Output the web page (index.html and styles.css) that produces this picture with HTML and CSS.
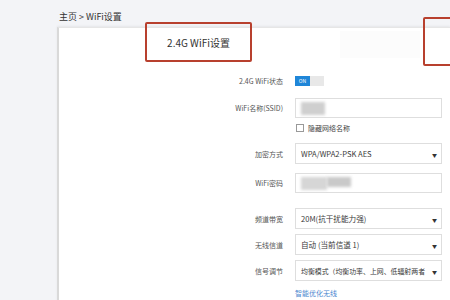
FILE: index.html
```html
<!DOCTYPE html>
<html lang="zh-CN">
<head>
    <meta charset="UTF-8">
    <title>WiFi设置</title>
    <link rel="stylesheet" href="styles.css">
</head>
<body>
    <div class="crumb">主页 &gt; WiFi设置</div>
    <div class="card">
        <div class="tabs">
            <div class="tab tab-active">2.4G WiFi设置</div>
            <div class="tab-gap"><div class="tab-shade"></div></div>
            <div class="tab tab-next"></div>
        </div>

        <div class="form">
            <div class="row row-toggle">
                <div class="label">2.4G WiFi状态</div>
                <div class="toggle"><span class="toggle-on">ON</span><span class="toggle-off"></span></div>
            </div>
            <div class="row row-ssid">
                <div class="label">WiFi名称(SSID)</div>
                <div class="field"><div class="blur blur-ssid"></div></div>
            </div>
            <div class="row row-check">
                <div class="label"></div>
                <label class="check"><span class="box"></span>隐藏网络名称</label>
            </div>
            <div class="row row-enc">
                <div class="label">加密方式</div>
                <div class="field select">WPA/WPA2-PSK AES<span class="arrow">▼</span></div>
            </div>
            <div class="row row-pass">
                <div class="label">WiFi密码</div>
                <div class="field"><div class="blur blur-pass"></div><div class="blur blur-pass2"></div></div>
            </div>
            <div class="row row-band">
                <div class="label">频道带宽</div>
                <div class="field select">20M(抗干扰能力强)<span class="arrow">▼</span></div>
            </div>
            <div class="row row-chan">
                <div class="label">无线信道</div>
                <div class="field select">自动 (当前信道 1)<span class="arrow">▼</span></div>
            </div>
            <div class="row row-sig">
                <div class="label">信号调节</div>
                <div class="field select"><span class="small">均衡模式（均衡功率、上网、低辐射两者</span><span class="arrow">▼</span></div>
            </div>
            <div class="row row-link">
                <div class="label"></div>
                <a class="link">智能优化无线</a>
            </div>
        </div>
    </div>
</body>
</html>
```

FILE: styles.css
```css
body {
    margin: 0;
    background-color: #f3f4f7;
    font-family: "Noto Sans CJK SC", "Noto Sans", sans-serif;
    color: #333;
    height: 300px;
    overflow: hidden;
}

.crumb {
    font-size: 9px;
    line-height: 14px;
    padding: 10px 0 0 59px;
    height: 17px;
    color: #333;
}

.card {
    margin-left: 57px;
    background: #ffffff;
    border-left: 2px solid #d9d9d9;
    border-top: 1px solid #e6e6e6;
    box-shadow: 0 -1px 2px rgba(0, 0, 0, 0.06);
    height: 280px;
}

.tabs {
    display: flex;
    height: 33px;
}

.tab {
    box-sizing: border-box;
    border: 2px solid #b8402e;
    border-radius: 2px;
    flex: none;
}

.tab-active {
    margin: -6px 0 0 86px;
    width: 107px;
    height: 40px;
    font-size: 10px;
    color: #333;
    display: flex;
    align-items: center;
    justify-content: center;
}

.tab-gap {
    width: 171px;
    flex: none;
    padding: 3px 0 0 88px;
    box-sizing: border-box;
}

.tab-shade {
    width: 80px;
    height: 27px;
    background: #fcfcfc;
}

.tab-next {
    margin-top: -11px;
    width: 40px;
    height: 49px;
}

.form {
    padding-top: 14px;
}

.row {
    display: flex;
    align-items: center;
}

.label {
    width: 236px;
    flex: none;
    text-align: right;
    font-size: 7px;
    color: #555;
    padding-right: 12px;
    box-sizing: border-box;
}

.field {
    width: 147px;
    height: 20px;
    box-sizing: border-box;
    border: 1px solid #dedede;
    background: #fff;
    position: relative;
    display: flex;
    align-items: center;
    padding-left: 5px;
    font-size: 7.6px;
    color: #3a3a3a;
}

.select {
    height: 21px;
}

.arrow {
    position: absolute;
    right: 4px;
    top: 7px;
    font-size: 5px;
    color: #333;
}

.small {
    font-size: 6.9px;
    white-space: nowrap;
}

.row-toggle { height: 12px; }
.row-ssid { margin-top: 11px; }
.row-check { margin-top: 5px; height: 10px; }
.row-enc { margin-top: 10px; }
.row-pass { margin-top: 9px; }
.row-band { margin-top: 15px; }
.row-chan { margin-top: 5px; }
.row-sig { margin-top: 5px; }
.row-link { margin-top: 6px; height: 12px; }

.toggle {
    display: flex;
    height: 10px;
}

.toggle-on {
    width: 15px;
    background: #1f86d8;
    color: #fff;
    font-size: 5px;
    line-height: 10px;
    text-align: center;
}

.toggle-off {
    width: 14px;
    background: #e8e8e8;
}

.blur {
    filter: blur(1.5px);
    background: #cfcfcf;
}

.blur-ssid {
    width: 24px;
    height: 13px;
}

.blur-pass {
    width: 26px;
    height: 13px;
    background: #d6d6d6;
}

.blur-pass2 {
    width: 24px;
    height: 10px;
    background: #c9c9c9;
    margin-top: -3px;
}

.check {
    display: flex;
    align-items: center;
    font-size: 7px;
    color: #444;
}

.box {
    width: 6px;
    height: 6px;
    border: 1px solid #999;
    margin: 0 4px 0 1px;
}

.link {
    font-size: 7px;
    color: #4c87cf;
}
```
